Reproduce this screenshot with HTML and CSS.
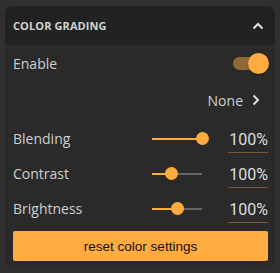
FILE: index.html
```html
<!DOCTYPE html>
<html>
<head>
<meta charset="utf-8">
<link rel="stylesheet" href="styles.css">
</head>
<body>
<div class="card">
  <div class="header">
    <span class="title">Color Grading</span>
    <svg class="chev-up" width="12" height="8" viewBox="0 0 12 8"><path d="M1.5 6.5 L6 2 L10.5 6.5" fill="none" stroke="#e0e0e0" stroke-width="2"/></svg>
  </div>
  <div class="body">
    <div class="row enable-row">
      <span class="label">Enable</span>
      <div class="toggle"><div class="knob-big"></div></div>
    </div>
    <div class="row none-row">
      <span class="label">None</span>
      <svg class="chev-right" width="8" height="12" viewBox="0 0 8 12"><path d="M1.5 1.5 L6 6 L1.5 10.5" fill="none" stroke="#e0e0e0" stroke-width="2"/></svg>
    </div>
    <div class="slider-row">
      <span class="label">Blending</span>
      <div class="slider"><div class="fill" style="width:100%"></div><div class="knob" style="left:100%"></div></div>
      <div class="value">100%</div>
    </div>
    <div class="slider-row">
      <span class="label">Contrast</span>
      <div class="slider"><div class="fill" style="width:38%"></div><div class="knob" style="left:38%"></div></div>
      <div class="value">100%</div>
    </div>
    <div class="slider-row">
      <span class="label">Brightness</span>
      <div class="slider"><div class="fill" style="width:50%"></div><div class="knob" style="left:50%"></div></div>
      <div class="value">100%</div>
    </div>
    <button class="reset">reset color settings</button>
  </div>
</div>
</body>
</html>
```
FILE: styles.css
```css
html, body {
  margin: 0;
  padding: 0;
  background: #303030;
}
body {
  padding: 6px 5px 4px 5px;
  font-family: "Open Sans", sans-serif;
}
.card {
  width: 270px;
  height: 263px;
  background: #2a2a2a;
  border-radius: 8px;
  overflow: hidden;
  display: flex;
  flex-direction: column;
}
.header {
  height: 39px;
  background: #222222;
  display: flex;
  align-items: center;
  justify-content: space-between;
  padding: 0 11px 0 8px;
}
.title {
  text-transform: uppercase;
  font-weight: 700;
  font-size: 11px;
  letter-spacing: 0.1px;
  color: #d2d2d2;
}
.chev-up { display: block; }
.body {
  padding: 0 7px 0 8px;
  display: flex;
  flex-direction: column;
}
.label {
  font-size: 14px;
  color: #cfcfcf;
}
.row {
  display: flex;
  align-items: center;
}
.enable-row {
  height: 37px;
  justify-content: space-between;
}
.toggle {
  position: relative;
  width: 35px;
  height: 13px;
  border-radius: 7px;
  background: #906a36;
}
.knob-big {
  position: absolute;
  right: -1px;
  top: -4px;
  width: 21px;
  height: 21px;
  border-radius: 50%;
  background: #ffab40;
  box-shadow: 0 1px 2px rgba(0,0,0,0.4);
}
.none-row {
  height: 36px;
  justify-content: flex-end;
  gap: 9px;
  padding-right: 8px;
  margin-bottom: 3px;
}
.chev-right { display: block; }
.slider-row {
  height: 35px;
  display: grid;
  grid-template-columns: 139px 50px 1fr;
  align-items: center;
}
.slider {
  position: relative;
  height: 2px;
  background: #666;
}
.fill {
  height: 2px;
  background: #ffab40;
}
.knob {
  position: absolute;
  top: -6px;
  width: 13px;
  height: 13px;
  margin-left: -6.5px;
  border-radius: 50%;
  background: #ffab40;
}
.value {
  justify-self: end;
  width: 40px;
  font-family: Roboto, sans-serif;
  font-size: 16px;
  color: #dedede;
  text-align: right;
  height: 24px;
  line-height: 24px;
  border-bottom: 1px solid #7a5b2d;
  margin-top: 3px;
}
.reset {
  margin-top: 5px;
  height: 30px;
  background: #ffab40;
  border: none;
  border-radius: 2px;
  font-family: "Liberation Sans", Arial, sans-serif;
  font-size: 13.5px;
  color: #111;
  padding: 0;
}
```
